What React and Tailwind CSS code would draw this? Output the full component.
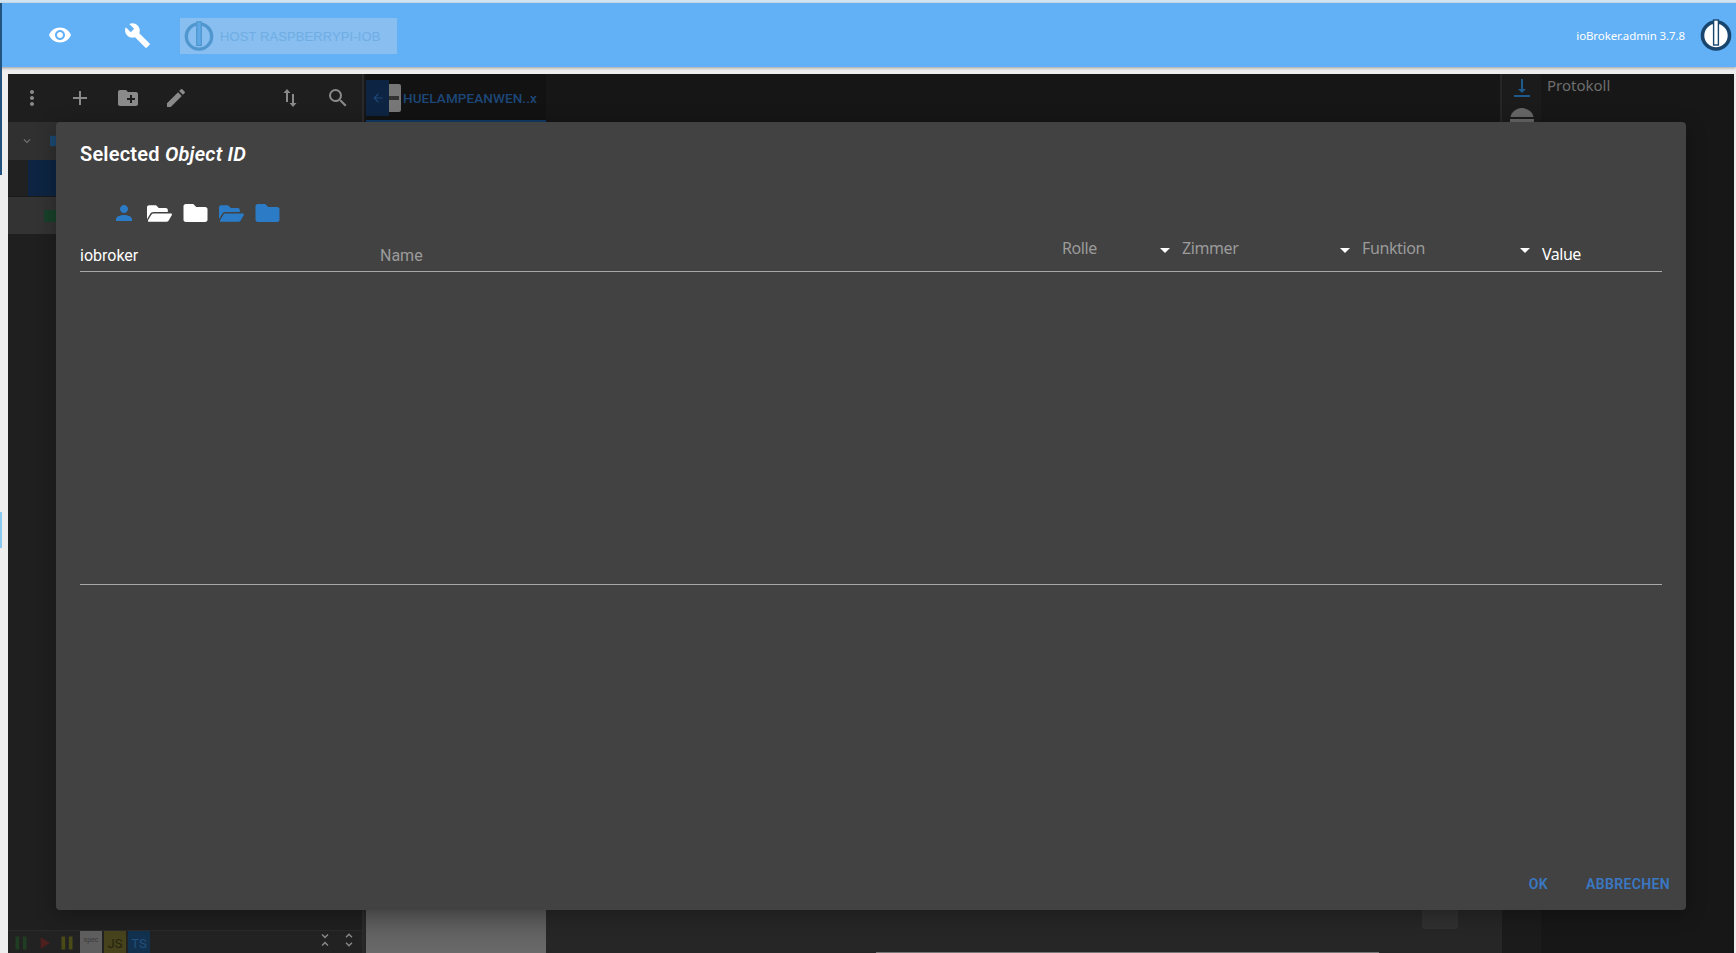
import React from "react";
import { MdVisibility, MdBuild, MdMoreVert, MdAdd, MdCreateNewFolder, MdEdit, MdSearch, MdPerson, MdArrowBack, MdExpandMore, MdArrowDropDown, MdVerticalAlignBottom, MdUnfoldLess, MdUnfoldMore, MdPause, MdPlayArrow } from "react-icons/md";
import { FaFolder, FaFolderOpen } from "react-icons/fa";

function Logo({ size, ring, bar, fill }) {
  return (
    <svg width={size} height={size} viewBox="0 0 32 32" className="shrink-0">
      <circle cx="16" cy="16.5" r="13.5" fill={fill} stroke={ring} strokeWidth="3.6" />
      <rect x="13.6" y="1" width="4.8" height="25" fill={bar} stroke={ring} strokeWidth="1.4" />
    </svg>
  );
}

function SortIcon({ className }) {
  return (
    <svg width="24" height="24" viewBox="0 0 24 24" className={className} fill="currentColor">
      <path d="M9 3 5.500 7H8v9h2V7h2.500L9 3Z" />
      <path d="M15 21l3.500-4H16V8h-2v9h-2.500L15 21Z" />
    </svg>
  );
}

function HeaderCol({ label, width }) {
  return (
    <div className={`flex items-start shrink-0 ${width}`}>
      <span className="flex-1 text-[16px] leading-[20px] text-[#9b9b9b] font-['Noto_Sans',sans-serif] tracking-[-0.4px] -mt-[1px]">{label}</span>
      <MdArrowDropDown size={24} className="text-white -mt-[1px] mr-[5px] shrink-0" />
    </div>
  );
}

export default function App() {
  return (
    <div className="relative w-[1736px] h-[953px] overflow-hidden bg-[#eeeeee] font-['Roboto',sans-serif]">
      <div className="h-[3px] bg-[#d3e6f3]" />
      <header className="h-[64px] bg-[#62b1f6] flex items-center shadow-[0_1px_3px_rgba(0,0,0,0.35)] relative z-10">
        <div className="ml-[48px] w-[24px] flex justify-center"><MdVisibility size={24} className="text-white" /></div>
        <div className="ml-[50px] w-[30px] flex justify-center"><MdBuild size={27} className="text-white" /></div>
        <div className="ml-[28px] w-[217px] h-[36px] mt-[2px] bg-[#88bef0] flex items-center pl-[4px] gap-[6px]">
          <Logo size={30} ring="#5197cf" bar="#5ea9e6" fill="#88bef0" />
          <span className="text-[13px] text-[#6fadE4] font-['Liberation_Sans',sans-serif] tracking-[0.1px] whitespace-nowrap mt-[1px]">HOST RASPBERRYPI-IOB</span>
        </div>
        <div className="ml-auto flex items-center mr-[4px]">
          <span className="text-[11.500px] text-white font-['Noto_Sans',sans-serif] tracking-[-0.1px] mr-[15px] mt-[1px]">ioBroker.admin 3.7.8</span>
          <Logo size={32} ring="#17456e" bar="#ffffff" fill="#ffffff" />
        </div>
      </header>

      <main className="absolute left-[8px] right-[2px] top-[74px] bottom-0 flex bg-[#1b1b1b]">
        <section className="w-[356px] shrink-0 flex flex-col bg-[#1f1f1f] border-r-[2px] border-[#2a2a2a]">
          <div className="h-[48px] flex items-center text-[#8a8a8a] relative bg-[#1e1e1e]">
            <div className="flex items-center pl-[12px] gap-[24px]">
              <MdMoreVert size={24} />
              <MdAdd size={24} />
              <MdCreateNewFolder size={24} />
              <MdEdit size={24} />
            </div>
            <div className="ml-auto flex items-center gap-[24px] pr-[12px]">
              <SortIcon />
              <MdSearch size={24} />
            </div>
          </div>
          <div className="h-[38px] bg-[#303030] flex items-center pl-[12px] gap-[16px] text-[#777]">
            <MdExpandMore size={14} />
            <FaFolder size={14} className="text-[#1c4a73]" />
          </div>
          <div className="h-[37px] bg-[#212121] flex border-b border-[#1a1a1a]">
            <div className="w-[20px]" />
            <div className="flex-1 bg-[#0d2542]" />
          </div>
          <div className="h-[37px] bg-[#333333] flex items-center pl-[36px]">
            <div className="w-[12px] h-[12px] bg-[#17402a]" />
          </div>
          <div className="flex-1" />
          <div className="h-[23px] bg-[#222222] border-t border-[#2a2a2a] flex items-start overflow-hidden">
            <div className="flex items-center pl-[2px] pt-[1px] w-[72px] shrink-0 justify-between pr-[2px]">
              <MdPause size={22} className="text-[#1f3d22]" />
              <MdPlayArrow size={20} className="text-[#4f1f1f]" />
              <MdPause size={22} className="text-[#4a4a16]" />
            </div>
            <div className="w-[22px] h-[22px] bg-[#5e5e5e] text-[7px] text-[#3a3a3a] leading-[18px] text-center">spec</div>
            <div className="ml-[2px] w-[22px] h-[22px] bg-[#45421c] text-[13px] text-[#24220e] leading-[25px] text-center">JS</div>
            <div className="ml-[2px] w-[22px] h-[22px] bg-[#12314f] text-[13px] text-[#224f7c] leading-[25px] text-center">TS</div>
            <div className="ml-auto flex items-center text-[#8a8a8a] pr-[4px] gap-[6px]">
              <MdUnfoldLess size={18} />
              <MdUnfoldMore size={18} />
            </div>
          </div>
        </section>

        <section className="flex-1 flex flex-col bg-[#262626] min-w-0">
          <div className="h-[48px] bg-[#161616] flex items-stretch">
            <div className="w-[180px] ml-[2px] flex items-center border-b-[2px] border-[#123a66] bg-[#121212] text-[#1d4778]">
              <div className="w-[23px] h-[36px] bg-[#0d2542] flex items-center justify-center mt-[1px]"><MdArrowBack size={14} /></div>
              <div className="w-[12px] h-[28px] bg-[#777] rounded-r-[2px] flex items-center mt-[1px]"><div className="w-[10px] h-[4px] bg-[#333]" /></div>
              <span className="ml-[2px] text-[13.500px] font-medium whitespace-nowrap mt-[3px] tracking-[0.1px]">HUELAMPEANWEN..x</span>
            </div>
          </div>
          <div className="flex-1 flex relative">
            <div className="w-[180px] ml-[2px] mt-[788px] bg-gradient-to-b from-[#575757] to-[#6a6a6a]" />
            <div className="absolute left-[1058px] top-[787px] w-[36px] h-[20px] bg-[#303030] rounded-b-[3px]" />
            <div className="absolute left-[512px] bottom-0 w-[503px] h-[1px] bg-[#777]" />
          </div>
        </section>

        <section className="w-[41px] shrink-0 bg-[#1b1b1b] border-l-[2px] border-[#262626] flex flex-col items-center">
          <MdVerticalAlignBottom size={24} className="text-[#1e5a8c] mt-[2px]" />
          <div className="w-[24px] h-[24px] rounded-full bg-[#666] mt-[8px] flex flex-col justify-center gap-[3px]">
            <div className="h-[2px] bg-[#1b1b1b]" />
            <div className="h-[2px] bg-[#1b1b1b]" />
          </div>
        </section>
        <section className="w-[193px] shrink-0 bg-[#171717] pl-[6px]">
          <div className="text-[15px] leading-[22px] text-[#6e6e6e] font-['Noto_Sans',sans-serif]">Protokoll</div>
        </section>
      </main>

      <div className="absolute z-20 left-0 top-[3px] w-[2px] h-[172px] bg-[#22527e]" />
      <div className="absolute z-20 left-0 top-[512px] w-[2px] h-[36px] bg-[#8cc9f2]" />

      <div className="absolute left-[56px] top-[122px] w-[1630px] h-[788px] z-20 bg-[#424242] rounded-[4px] flex flex-col shadow-[0_4px_20px_rgba(0,0,0,0.3)]">
        <h2 className="pl-[24px] pt-[20px] text-[20px] leading-[24px] font-semibold text-white tracking-[0.2px]">
          Selected <em className="italic font-semibold">Object ID</em>
        </h2>
        <div className="mt-[35px] pl-[56px] h-[24px] flex items-center">
          <MdPerson size={24} className="text-[#2b7bc6] w-[24px]" />
          <div className="ml-[11px] flex items-center gap-[11px]">
            <FaFolderOpen size={25} className="text-white w-[25px]" />
            <FaFolder size={24} className="text-white w-[25px]" />
            <FaFolderOpen size={25} className="text-[#2b7bc6] w-[25px]" />
            <FaFolder size={24} className="text-[#2b7bc6] w-[25px]" />
          </div>
        </div>
        <div className="mx-[24px] mt-[14px] h-[33px] border-b border-[#a8a8a8] flex items-start">
          <span className="w-[300px] shrink-0 text-[16px] leading-[24px] text-white mt-[5px]">iobroker</span>
          <span className="w-[682px] shrink-0 text-[16px] leading-[24px] text-[#9b9b9b] mt-[5px]">Name</span>
          <HeaderCol label="Rolle" width="w-[120px]" />
          <HeaderCol label="Zimmer" width="w-[180px]" />
          <HeaderCol label="Funktion" width="w-[180px]" />
          <span className="text-[16px] leading-[24px] text-white font-['Noto_Sans',sans-serif] tracking-[-0.5px] mt-[3px]">Value</span>
        </div>
        <div className="mx-[24px] h-[313px] border-b border-[#a8a8a8]" />
        <div className="flex-1" />
        <div className="flex justify-end items-center gap-[38px] pr-[16px] pb-[16px] text-[14px] leading-[20px] font-semibold text-[#3a78c4] tracking-[0.35px]">
          <span>OK</span>
          <span>ABBRECHEN</span>
        </div>
      </div>
    </div>
  );
}
